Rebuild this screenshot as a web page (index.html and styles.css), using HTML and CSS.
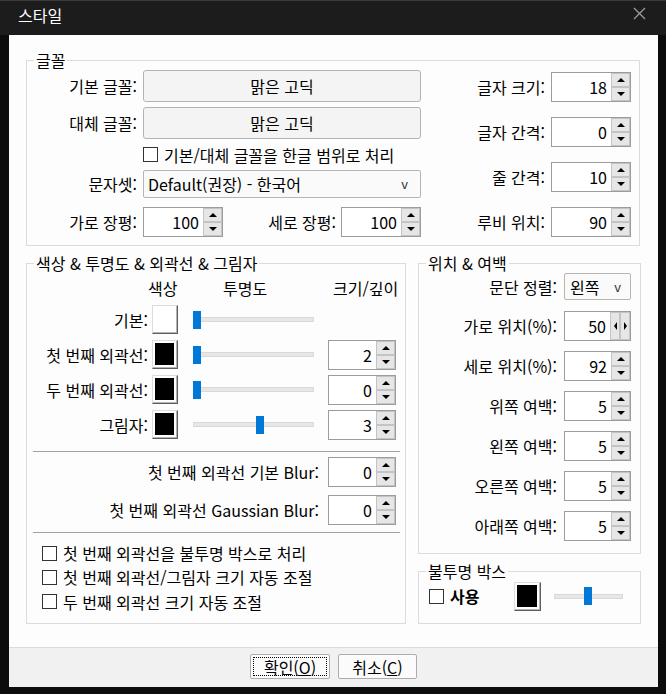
FILE: index.html
```html
<!DOCTYPE html>
<html lang="ko">
<head>
<meta charset="utf-8">
<title>스타일</title>
<link rel="stylesheet" href="styles.css">
</head>
<body>
<div class="window">
  <header class="titlebar">
    <span class="title">스타일</span>
    <svg class="close" width="13" height="13" viewBox="0 0 13 13"><path d="M1 1L12 12M12 1L1 12" stroke="#9b9b9b" stroke-width="1.3" fill="none"/></svg>
  </header>
  <div class="client">
    <main class="main">
      <fieldset class="group g-font">
        <legend>글꼴</legend>
        <div class="font-body">
          <div class="font-left">
            <div class="frow r32">
              <span class="lbl lw110">기본 글꼴:</span>
              <button class="fontbtn">맑은 고딕</button>
            </div>
            <div class="frow r32 mt5">
              <span class="lbl lw110">대체 글꼴:</span>
              <button class="fontbtn">맑은 고딕</button>
            </div>
            <div class="frow r31 chkrow-font">
              <span class="chk"></span><span class="chk-text">기본/대체 글꼴을 한글 범위로 처리</span>
            </div>
            <div class="frow r28">
              <span class="lbl lw110">문자셋:</span>
              <div class="select wide"><span>Default(권장) - 한국어</span><span class="caret">v</span></div>
            </div>
            <div class="frow r30 mt9">
              <span class="lbl lw110">가로 장평:</span>
              <div class="spin w80"><span class="val">100</span><span class="ud"><i class="up"></i><i class="dn"></i></span></div>
              <span class="lbl grow">세로 장평:</span>
              <div class="spin w80"><span class="val">100</span><span class="ud"><i class="up"></i><i class="dn"></i></span></div>
            </div>
          </div>
          <div class="font-right">
            <span class="lbl">글자 크기:</span>
            <div class="spin w80"><span class="val">18</span><span class="ud"><i class="up"></i><i class="dn"></i></span></div>
            <span class="lbl">글자 간격:</span>
            <div class="spin w80"><span class="val">0</span><span class="ud"><i class="up"></i><i class="dn"></i></span></div>
            <span class="lbl">줄 간격:</span>
            <div class="spin w80"><span class="val">10</span><span class="ud"><i class="up"></i><i class="dn"></i></span></div>
            <span class="lbl">루비 위치:</span>
            <div class="spin w80"><span class="val">90</span><span class="ud"><i class="up"></i><i class="dn"></i></span></div>
          </div>
        </div>
      </fieldset>

      <div class="bottom">
        <fieldset class="group g-color">
          <legend>색상 &amp; 투명도 &amp; 외곽선 &amp; 그림자</legend>
          <div class="cgrid">
            <span></span>
            <span class="hd hd-color">색상</span>
            <span class="hd hd-op">투명도</span>
            <span class="hd hd-size">크기/깊이</span>

            <span class="clbl">기본:</span>
            <span class="swatch"><i class="fill-white"></i></span>
            <span class="slider s121"><span class="track"></span><span class="thumb" style="left:0px"></span></span>
            <span></span>

            <span class="clbl">첫 번째 외곽선:</span>
            <span class="swatch"><i class="fill-black"></i></span>
            <span class="slider s121"><span class="track"></span><span class="thumb" style="left:0px"></span></span>
            <div class="spin w68"><span class="val">2</span><span class="ud"><i class="up"></i><i class="dn"></i></span></div>

            <span class="clbl">두 번째 외곽선:</span>
            <span class="swatch"><i class="fill-black"></i></span>
            <span class="slider s121"><span class="track"></span><span class="thumb" style="left:0px"></span></span>
            <div class="spin w68"><span class="val">0</span><span class="ud"><i class="up"></i><i class="dn"></i></span></div>

            <span class="clbl">그림자:</span>
            <span class="swatch"><i class="fill-black"></i></span>
            <span class="slider s121"><span class="track"></span><span class="thumb" style="left:63px"></span></span>
            <div class="spin w68"><span class="val">3</span><span class="ud"><i class="up"></i><i class="dn"></i></span></div>
          </div>

          <div class="sep"></div>

          <div class="blurrow">
            <span class="lbl">첫 번째 외곽선 기본 Blur:</span>
            <div class="spin w68"><span class="val">0</span><span class="ud"><i class="up"></i><i class="dn"></i></span></div>
          </div>
          <div class="blurrow">
            <span class="lbl">첫 번째 외곽선 Gaussian Blur:</span>
            <div class="spin w68"><span class="val">0</span><span class="ud"><i class="up"></i><i class="dn"></i></span></div>
          </div>

          <div class="sep sep2"></div>

          <div class="chklist">
            <div class="chkline"><span class="chk"></span><span class="chk-text">첫 번째 외곽선을 불투명 박스로 처리</span></div>
            <div class="chkline"><span class="chk"></span><span class="chk-text">첫 번째 외곽선/그림자 크기 자동 조절</span></div>
            <div class="chkline last"><span class="chk"></span><span class="chk-text">두 번째 외곽선 크기 자동 조절</span></div>
          </div>
        </fieldset>

        <div class="rcol">
          <fieldset class="group g-pos">
            <legend>위치 &amp; 여백</legend>
            <div class="pgrid">
              <span class="lbl">문단 정렬:</span>
              <div class="select small"><span>왼쪽</span><span class="caret">v</span></div>

              <span class="lbl">가로 위치(%):</span>
              <div class="spin w67"><span class="val">50</span><span class="lr"><i class="lt"></i><i class="rt"></i></span></div>

              <span class="lbl">세로 위치(%):</span>
              <div class="spin w67"><span class="val">92</span><span class="ud"><i class="up"></i><i class="dn"></i></span></div>

              <span class="lbl">위쪽 여백:</span>
              <div class="spin w67"><span class="val">5</span><span class="ud"><i class="up"></i><i class="dn"></i></span></div>

              <span class="lbl">왼쪽 여백:</span>
              <div class="spin w67"><span class="val">5</span><span class="ud"><i class="up"></i><i class="dn"></i></span></div>

              <span class="lbl">오른쪽 여백:</span>
              <div class="spin w67"><span class="val">5</span><span class="ud"><i class="up"></i><i class="dn"></i></span></div>

              <span class="lbl">아래쪽 여백:</span>
              <div class="spin w67"><span class="val">5</span><span class="ud"><i class="up"></i><i class="dn"></i></span></div>
            </div>
          </fieldset>

          <fieldset class="group g-opaque">
            <legend>불투명 박스</legend>
            <div class="oprow">
              <span class="chk"></span><span class="bold">사용</span>
              <span class="swatch w27"><i class="fill-black"></i></span>
              <span class="slider s69"><span class="track"></span><span class="thumb" style="left:30px"></span></span>
            </div>
          </fieldset>
        </div>
      </div>
    </main>
    <footer class="footer">
      <button class="btn focus">확인(<u>O</u>)</button>
      <button class="btn w79">취소(<u>C</u>)</button>
    </footer>
  </div>
</div>
</body>
</html>
```

FILE: styles.css
```css
* { box-sizing: border-box; }
html, body { margin: 0; padding: 0; }
body {
  background: #0c0c0c;
  font-family: "Noto Sans CJK KR", sans-serif;
  font-size: 16px;
  line-height: 20px;
  color: #000;
}
.window {
  width: 666px;
  height: 694px;
  display: flex;
  flex-direction: column;
  background: #0c0c0c;
  border-top: 1px solid #3a3a3a;
}
.titlebar {
  height: 34px;
  flex-shrink: 0;
  background: #1c1c1c;
  display: flex;
  align-items: flex-start;
}
.title {
  color: #fff;
  margin-left: 18px;
  line-height: 28px;
}
.close {
  margin-left: auto;
  margin-right: 20px;
  margin-top: 6px;
}
.client {
  flex: 1;
  margin: 0 8px 7px 9px;
  display: flex;
  flex-direction: column;
  background: #fdfdfd;
}
.main {
  flex: 1;
  padding: 17px 17px 0 17px;
}

/* group boxes */
.group {
  margin: 0;
  padding: 0;
  border: 1px solid #dcdcdc;
  min-width: 0;
}
.group > legend {
  margin-left: 7px;
  padding: 0 2px;
  line-height: 16px;
}
.g-font { margin-right: 1px; }
.font-body {
  display: flex;
  justify-content: space-between;
  padding: 2px 8px 8px 0;
}
.font-left {
  display: flex;
  flex-direction: column;
}
.font-right {
  display: grid;
  grid-template-columns: auto 80px;
  grid-auto-rows: 30px;
  column-gap: 6px;
  row-gap: 15px;
  padding-top: 2px;
  align-items: center;
  align-content: start;
}
.frow { display: flex; align-items: center; }
.r32 { height: 32px; }
.r31 { height: 31px; }
.r28 { height: 28px; }
.r30 { height: 30px; }
.mt5 { margin-top: 5px; }
.mt9 { margin-top: 9px; }
.lbl { white-space: nowrap; text-align: right; }
.lw110 { width: 110px; margin-right: 6px; flex-shrink: 0; }
.grow { flex: 1; margin-right: 5px; }

.fontbtn {
  width: 278px;
  height: 32px;
  border: 1px solid #b3b3b3;
  border-radius: 3px;
  background: #f4f4f4;
  font: inherit;
  line-height: 20px;
  color: #000;
  padding: 0;
}
.chkrow-font { padding-left: 116px; }
.chk {
  width: 15px;
  height: 15px;
  border: 1px solid #333;
  background: #fff;
  flex-shrink: 0;
}
.chk-text { margin-left: 6px; white-space: nowrap; }

.select {
  display: flex;
  align-items: center;
  justify-content: space-between;
  height: 28px;
  border: 1px solid #b5b5b5;
  border-radius: 2px;
  background: #fafafa;
  padding: 0 12px 0 4px;
  white-space: nowrap;
}
.select.wide { width: 278px; }
.select.small { width: 67px; height: 27px; padding: 0 9px 0 5px; }
.caret { font-size: 13px; color: #333; }

/* spin boxes */
.spin {
  display: flex;
  height: 30px;
  border: 1px solid #9c9c9c;
  background: #fff;
}
.w80 { width: 80px; }
.w68 { width: 68px; }
.w67 { width: 67px; }
.val {
  flex: 1;
  text-align: right;
  padding-right: 4px;
  align-self: center;
}
.ud {
  width: 19px;
  display: flex;
  flex-direction: column;
}
.ud i, .lr i {
  flex: 1;
  background: #e6e6e6;
  border: 1px solid #c4c4c4;
  display: flex;
  align-items: center;
  justify-content: center;
}
.ud .up::before {
  content: "";
  border-left: 4px solid transparent;
  border-right: 4px solid transparent;
  border-bottom: 4px solid #000;
}
.ud .dn::before {
  content: "";
  border-left: 4px solid transparent;
  border-right: 4px solid transparent;
  border-top: 4px solid #000;
}
.lr {
  width: 20px;
  display: flex;
}
.lr .lt::before {
  content: "";
  border-top: 4px solid transparent;
  border-bottom: 4px solid transparent;
  border-right: 3px solid #000;
}
.lr .rt::before {
  content: "";
  border-top: 4px solid transparent;
  border-bottom: 4px solid transparent;
  border-left: 3px solid #000;
}

/* bottom section */
.bottom {
  display: flex;
  gap: 12px;
  margin-top: 9px;
}
.g-color {
  width: 380px;
  padding: 7px 0 9px 0;
}
.cgrid {
  display: grid;
  grid-template-columns: 125px 41px 135px 68px;
  grid-template-rows: 24px repeat(4, 35px);
  align-items: center;
}
.hd { align-self: start; white-space: nowrap; }
.hd-color { margin-left: -4px; }
.hd-op { padding-left: 30px; }
.hd-size { padding-left: 5px; }
.clbl { text-align: right; padding-right: 4px; white-space: nowrap; }

.swatch {
  display: block;
  width: 26px;
  height: 29px;
  border: 1px solid;
  border-color: #dcdcdc #5e5e5e #5e5e5e #dcdcdc;
  background: #fff;
  padding: 2px 3px 3px 2px;
  box-shadow: inset -1px -1px 0 #b4b4b4;
}
.swatch i { display: block; width: 100%; height: 100%; }
.fill-black { background: #000; }
.fill-white { background: #fff; }
.swatch.w27 { width: 27px; margin-left: 35px; }

.slider {
  position: relative;
  height: 18px;
  display: flex;
  align-items: center;
}
.s121 { width: 121px; }
.s69 { width: 69px; margin-left: 13px; }
.track {
  width: 100%;
  height: 5px;
  background: #e7e7e7;
  border: 1px solid #d9d9d9;
}
.thumb {
  position: absolute;
  top: 0;
  width: 8px;
  height: 18px;
  background: #0078d7;
}

.sep {
  height: 1px;
  background: #a0a0a0;
  margin: 9px 5px 0 6px;
}
.sep2 { margin-top: 7px; }
.blurrow {
  display: flex;
  justify-content: flex-end;
  align-items: center;
  height: 30px;
  padding-right: 9px;
  margin-top: 5px;
}
.blurrow + .blurrow { margin-top: 8px; }
.blurrow .lbl { margin-right: 9px; }
.chklist {
  margin-top: 8px;
  padding-left: 15px;
  display: flex;
  flex-direction: column;
}
.chkline { display: flex; align-items: center; height: 24px; }
.chkline.last { height: 25px; }

.rcol {
  width: 223px;
  display: flex;
  flex-direction: column;
}
.g-pos { padding: 1px 9px 12px 0; }
.pgrid {
  display: grid;
  grid-template-columns: 1fr 67px;
  grid-template-rows: 29px repeat(6, 30px);
  column-gap: 7px;
  row-gap: 10px;
  align-items: center;
}
.g-opaque {
  margin-top: 9px;
  padding: 2px 0 12px 0;
}
.oprow {
  display: flex;
  align-items: center;
  height: 30px;
  padding-left: 10px;
}
.bold { font-weight: bold; margin-left: 6px; }

/* footer */
.footer {
  height: 40px;
  flex-shrink: 0;
  border-top: 1px solid #dcdcdc;
  background: #f1f1f1;
  display: flex;
  justify-content: center;
  gap: 8px;
  padding-top: 6px;
}
.btn {
  width: 80px;
  height: 25px;
  border: 1px solid #adadad;
  border-radius: 2px;
  background: #fbfbfb;
  font: inherit;
  line-height: 20px;
  color: #000;
  padding: 0;
}
.btn.w79 { width: 79px; }
.btn.focus { outline: 1px dotted #000; outline-offset: -4px; }
.btn u { text-decoration: underline; }
```
